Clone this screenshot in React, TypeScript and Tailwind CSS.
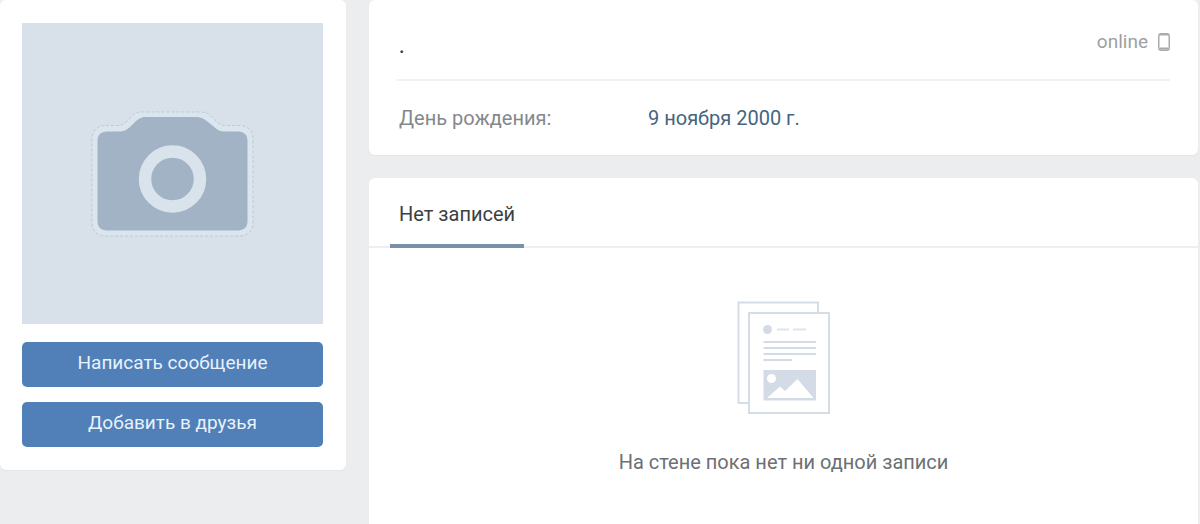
const CameraIcon = () => (
  <svg className="w-[164px] h-[126px]" viewBox="0 0 164 126" fill="none" aria-hidden="true">
    <path
      d="M15 14.5H27C31 14.5 33 13 36 10L41 5C44 2 46 1 51 1H109C114 1 117 2 120 5L125 10C128 13 131 14.5 135 14.5H148C157 14.5 162 20 162 28V111C162 120 157 125 148 125H15C6 125 1 120 1 111V28C1 20 6 14.5 15 14.5Z"
      fill="#dbe5ee"
      stroke="#bcc9d6"
      strokeWidth="1"
      strokeDasharray="3 2"
    />
    <path
      d="M16 20.5H28C33 20.5 36 19 40 15L44 11C48 7.500 50 6 55 6H105C110 6 113 7.500 117 11L122 15C126 19 129 20.500 133 20.500H147C153 20.500 156.500 24 156.500 30V110C156.500 116 153 119.500 147 119.500H16C10 119.500 6.500 116 6.500 110V30C6.500 24 10 20.500 16 20.500Z"
      fill="#a1b3c4"
    />
    <circle cx="81.5" cy="68" r="27.500" stroke="#d8e3ec" strokeWidth="12.500" />
  </svg>
);

const PostsIcon = () => (
  <svg className="w-[94px] h-[114px]" viewBox="0 0 94 114" fill="none" aria-hidden="true">
    <path d="M11 102H1.500V1.500H81V11" stroke="#d5dee7" strokeWidth="2" />
    <rect x="12" y="12" width="80" height="100" fill="#fff" stroke="#d5dee7" strokeWidth="2" />
    <circle cx="30.500" cy="28.500" r="4.500" fill="#d3dce6" />
    <path d="M40 28.500H52M56 28.500H69" stroke="#dde4eb" strokeWidth="2" />
    <path d="M26.500 41H79M26.500 47H79M26.500 53H79M26.500 59H55" stroke="#d3dce6" strokeWidth="2" />
    <rect x="26.500" y="69" width="52.500" height="30.500" fill="#d3dce6" />
    <circle cx="34.500" cy="77.500" r="4.500" fill="#fff" />
    <path d="M30 97L43 85.500L48 90L60.500 78L76.500 97Z" fill="#fff" />
  </svg>
);

const PhoneIcon = () => (
  <svg className="w-3 h-[18px]" viewBox="0 0 12 18" fill="none" aria-hidden="true">
    <rect x="0.750" y="0.750" width="10.500" height="16.500" rx="2.500" stroke="#a8abae" strokeWidth="1.500" />
    <path d="M2 1.500H10M2 15.500H10" stroke="#a8abae" strokeWidth="2" />
  </svg>
);

const actions = ['Написать сообщение', 'Добавить в друзья'];

const info = [{ label: 'День рождения:', value: '9 ноября 2000 г.' }];

const App = () => {
  return (
    <div className="min-h-screen flex items-start gap-[23px] bg-[#ebedef] pr-0.5 font-[Roboto,sans-serif] text-[20px] leading-6">
      {/* Photo and actions */}
      <aside className="w-[346px] shrink-0 bg-white rounded-md pl-[22px] pr-[23px] py-[23px] shadow-[0_1px_0_#e3e5e8]">
        <div className="aspect-square flex items-center justify-center bg-[#d8e0ea]">
          <CameraIcon />
        </div>
        <div className="flex flex-col gap-[15px] mt-[18px]">
          {actions.map((action) => (
            <button
              key={action}
              className="h-[45px] pb-1 rounded-[5px] bg-[#517fb7] text-[19px] text-[#e8f2fc] hover:bg-[#5b88bd]"
            >
              {action}
            </button>
          ))}
        </div>
      </aside>

      <main className="flex-1 min-w-0 min-h-screen flex flex-col gap-[23px]">
        {/* Profile info */}
        <section className="bg-white rounded-md px-7 pt-[30px] pb-[25px] shadow-[0_1px_0_#e3e5e8]">
          <div className="flex items-start justify-between pb-[25px] border-b-2 border-[#f0f1f3]">
            <h1 className="pt-1 -mb-1 pl-0.5 font-medium text-[#3c3f43]">.</h1>
            <span className="flex items-center gap-2.5 text-[19px] text-[#9da0a4]">
              online
              <PhoneIcon />
            </span>
          </div>
          <dl className="pt-[25px] pl-0.5">
            {info.map((row) => (
              <div key={row.label} className="flex">
                <dt className="w-[249px] text-[#85888b]">{row.label}</dt>
                <dd>
                  <a href="#birthday" className="text-[#456480] hover:underline">
                    {row.value}
                  </a>
                </dd>
              </div>
            ))}
          </dl>
        </section>

        {/* Wall */}
        <section className="flex-1 bg-white rounded-t-md">
          <div className="flex px-[21px] border-b-2 border-[#eceef1]">
            <h2 className="-mb-0.5 px-[9px] pt-6 pb-[18px] border-b-4 border-[#7890a8] text-[#3c3f43]">
              Нет записей
            </h2>
          </div>
          <div className="flex flex-col items-center pt-[53px] pb-10">
            <PostsIcon />
            <p className="mt-[35px] text-[#6d7074]">На стене пока нет ни одной записи</p>
          </div>
        </section>
      </main>
    </div>
  );
};

export default App;
